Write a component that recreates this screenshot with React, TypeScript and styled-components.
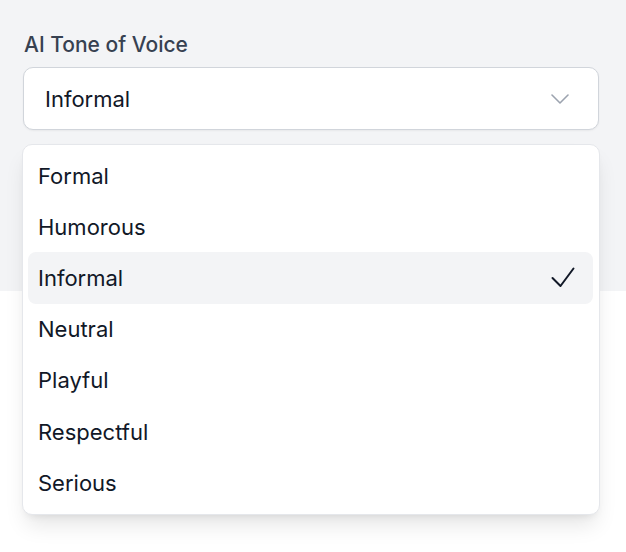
import React, { useState } from "react";
import styled, { createGlobalStyle } from "styled-components";

const GlobalStyle = createGlobalStyle`
  html, body {
    margin: 0;
    padding: 0;
    background: #ffffff;
  }
  body {
    font-family: Inter, "Noto Sans", "Liberation Sans", sans-serif;
    -webkit-font-smoothing: antialiased;
  }
  * { box-sizing: border-box; }
`;

const Page = styled.div`
  min-height: 552px;
  background: #ffffff;
`;

const Panel = styled.div`
  background: #f3f4f6;
  height: 291px;
  padding: 31px 27px 0 23px;
`;

const Field = styled.div`
  position: relative;
  width: 576px;
`;

const Label = styled.label`
  display: block;
  font-size: 21px;
  line-height: 28px;
  font-weight: 500;
  color: #374151;
  margin: 0 0 8px 1px;
`;

const Trigger = styled.button`
  display: flex;
  align-items: center;
  justify-content: space-between;
  width: 576px;
  height: 63px;
  padding: 0 29px 0 21px;
  background: #ffffff;
  border: 1px solid #d1d5db;
  border-radius: 10px;
  box-shadow: 0 1px 2px rgba(0, 0, 0, 0.05);
  font-family: inherit;
  font-size: 22px;
  color: #111827;
  text-align: left;
  cursor: pointer;
`;

const Menu = styled.ul`
  position: absolute;
  top: calc(100% + 14px);
  left: -1px;
  width: 578px;
  margin: 0;
  padding: 5px 6px 6px 5px;
  list-style: none;
  background: #ffffff;
  border: 1px solid #e5e7eb;
  border-radius: 10px;
  box-shadow: 0 14px 21px -4px rgba(0, 0, 0, 0.1),
    0 5px 8px -5px rgba(0, 0, 0, 0.1);
  z-index: 10;
`;

const Option = styled.li<{ $active: boolean }>`
  display: flex;
  align-items: center;
  justify-content: space-between;
  height: 51.2px;
  padding: 0 18px 0 10px;
  border-radius: 8px;
  background: ${(p) => (p.$active ? "#f3f4f6" : "transparent")};
  font-size: 22px;
  color: #111827;
  cursor: pointer;
`;

const Chevron = () => (
  <svg width="18" height="10" viewBox="0 0 18 10" fill="none">
    <polyline
      points="1,1 9,9 17,1"
      stroke="#9ca3af"
      strokeWidth="1.6"
      strokeLinecap="round"
      strokeLinejoin="round"
    />
  </svg>
);

const Check = () => (
  <svg width="24" height="21" viewBox="0 0 24 21" fill="none">
    <polyline
      points="1.5,11 9.5,19 22.5,1.5"
      stroke="#111827"
      strokeWidth="2"
      strokeLinecap="round"
      strokeLinejoin="round"
    />
  </svg>
);

const tones = [
  "Formal",
  "Humorous",
  "Informal",
  "Neutral",
  "Playful",
  "Respectful",
  "Serious",
];

export default function App() {
  const [value, setValue] = useState("Informal");
  return (
    <Page>
      <GlobalStyle />
      <Panel>
        <Label>AI Tone of Voice</Label>
        <Field>
          <Trigger type="button">
            <span>{value}</span>
            <Chevron />
          </Trigger>
          <Menu role="listbox">
            {tones.map((t) => (
              <Option
                key={t}
                role="option"
                aria-selected={t === value}
                $active={t === value}
                onClick={() => setValue(t)}
              >
                <span>{t}</span>
                {t === value && <Check />}
              </Option>
            ))}
          </Menu>
        </Field>
      </Panel>
    </Page>
  );
}
